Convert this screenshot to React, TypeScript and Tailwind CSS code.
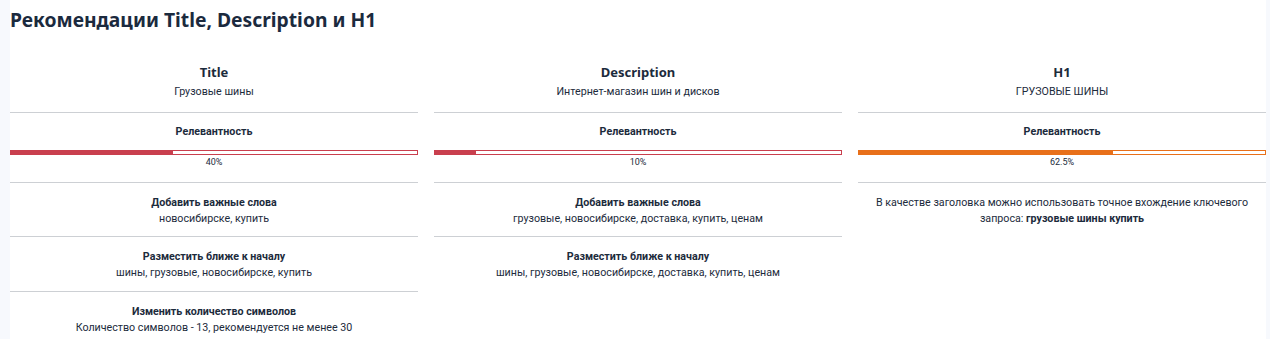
const font = { fontFamily: 'Roboto, "Liberation Sans", sans-serif' };

interface Item {
  label: string;
  value: React.ReactNode;
}

interface Column {
  name: string;
  text: string;
  percent: number;
  label: string;
  color: string;
  items: Item[];
}

const columns: Column[] = [
  {
    name: 'Title',
    text: 'Грузовые шины',
    percent: 40,
    label: '40%',
    color: 'red',
    items: [
      { label: 'Добавить важные слова', value: 'новосибирске, купить' },
      { label: 'Разместить ближе к началу', value: 'шины, грузовые, новосибирске, купить' },
      { label: 'Изменить количество символов', value: 'Количество символов - 13, рекомендуется не менее 30' },
    ],
  },
  {
    name: 'Description',
    text: 'Интернет-магазин шин и дисков',
    percent: 10,
    label: '10%',
    color: 'red',
    items: [
      { label: 'Добавить важные слова', value: 'грузовые, новосибирске, доставка, купить, ценам' },
      { label: 'Разместить ближе к началу', value: 'шины, грузовые, новосибирске, доставка, купить, ценам' },
    ],
  },
  {
    name: 'H1',
    text: 'ГРУЗОВЫЕ ШИНЫ',
    percent: 62.5,
    label: '62.5%',
    color: 'orange',
    items: [],
  },
];

function Bar({ percent, color }: { percent: number; color: string }) {
  const red = color === 'red';
  return (
    <div className={`h-[5px] w-full border ${red ? 'border-[#c93f4e]' : 'border-[#e8701a]'} bg-white`}>
      <div
        className={`h-full ${red ? 'bg-[#c93f4e]' : 'bg-[#e8701a]'}`}
        style={{ width: `${percent}%` }}
      />
    </div>
  );
}

function ColumnView({ col }: { col: Column }) {
  return (
    <div className="flex flex-col text-center text-[#1c2b3c]">
      <div className="h-[56px] pt-[7px] border-b border-[#cdd0d4]">
        <div className="text-[13px] font-bold leading-[17px]" style={{ fontFamily: '"Noto Sans", "Open Sans", sans-serif' }}>
          {col.name}
        </div>
        <div className="text-[10.7px] leading-[13px] mt-[4px]" style={font}>{col.text}</div>
      </div>
      <div className="h-[70px] pt-[12px] border-b border-[#cdd0d4]" style={font}>
        <div className="text-[10.7px] font-bold leading-[13px]">Релевантность</div>
        <div className="mt-[12px]">
          <Bar percent={col.percent} color={col.color} />
        </div>
        <div className="text-[9px] leading-[11px] mt-[2px]">{col.label}</div>
      </div>
      {col.name === 'H1' ? (
        <div className="pt-[12px] px-2 text-[10.7px] leading-[16px]" style={font}>
          В качестве заголовка можно использовать точное вхождение ключевого запроса:{' '}
          <span className="font-bold">грузовые шины купить</span>
        </div>
      ) : (
        col.items.map((item, i) => (
          <div
            key={item.label}
            className={`pt-[13px] ${i === 0 ? 'h-[54px]' : 'h-[55px]'} ${i < col.items.length - 1 ? 'border-b border-[#cdd0d4]' : ''}`}
            style={font}
          >
            <div className="text-[10.7px] font-bold leading-[14px]">{item.label}</div>
            <div className="text-[10.7px] leading-[14px] mt-[2px]">{item.value}</div>
          </div>
        ))
      )}
    </div>
  );
}

export default function App() {
  return (
    <div className="w-[1270px] h-[339px] bg-[#f7f9fd] overflow-hidden">
      <div className="ml-[10px] w-[1256px] h-full bg-white">
        <h2
          className="text-[19.3px] font-bold text-[#1b2a3e] leading-[26px] pt-[7px]"
          style={{ fontFamily: '"Noto Sans", "Open Sans", sans-serif' }}
        >
          Рекомендации Title, Description и H1
        </h2>
        <div className="grid grid-cols-3 gap-x-[16px] mt-[24px]">
          {columns.map(col => (
            <ColumnView key={col.name} col={col} />
          ))}
        </div>
      </div>
    </div>
  );
}
